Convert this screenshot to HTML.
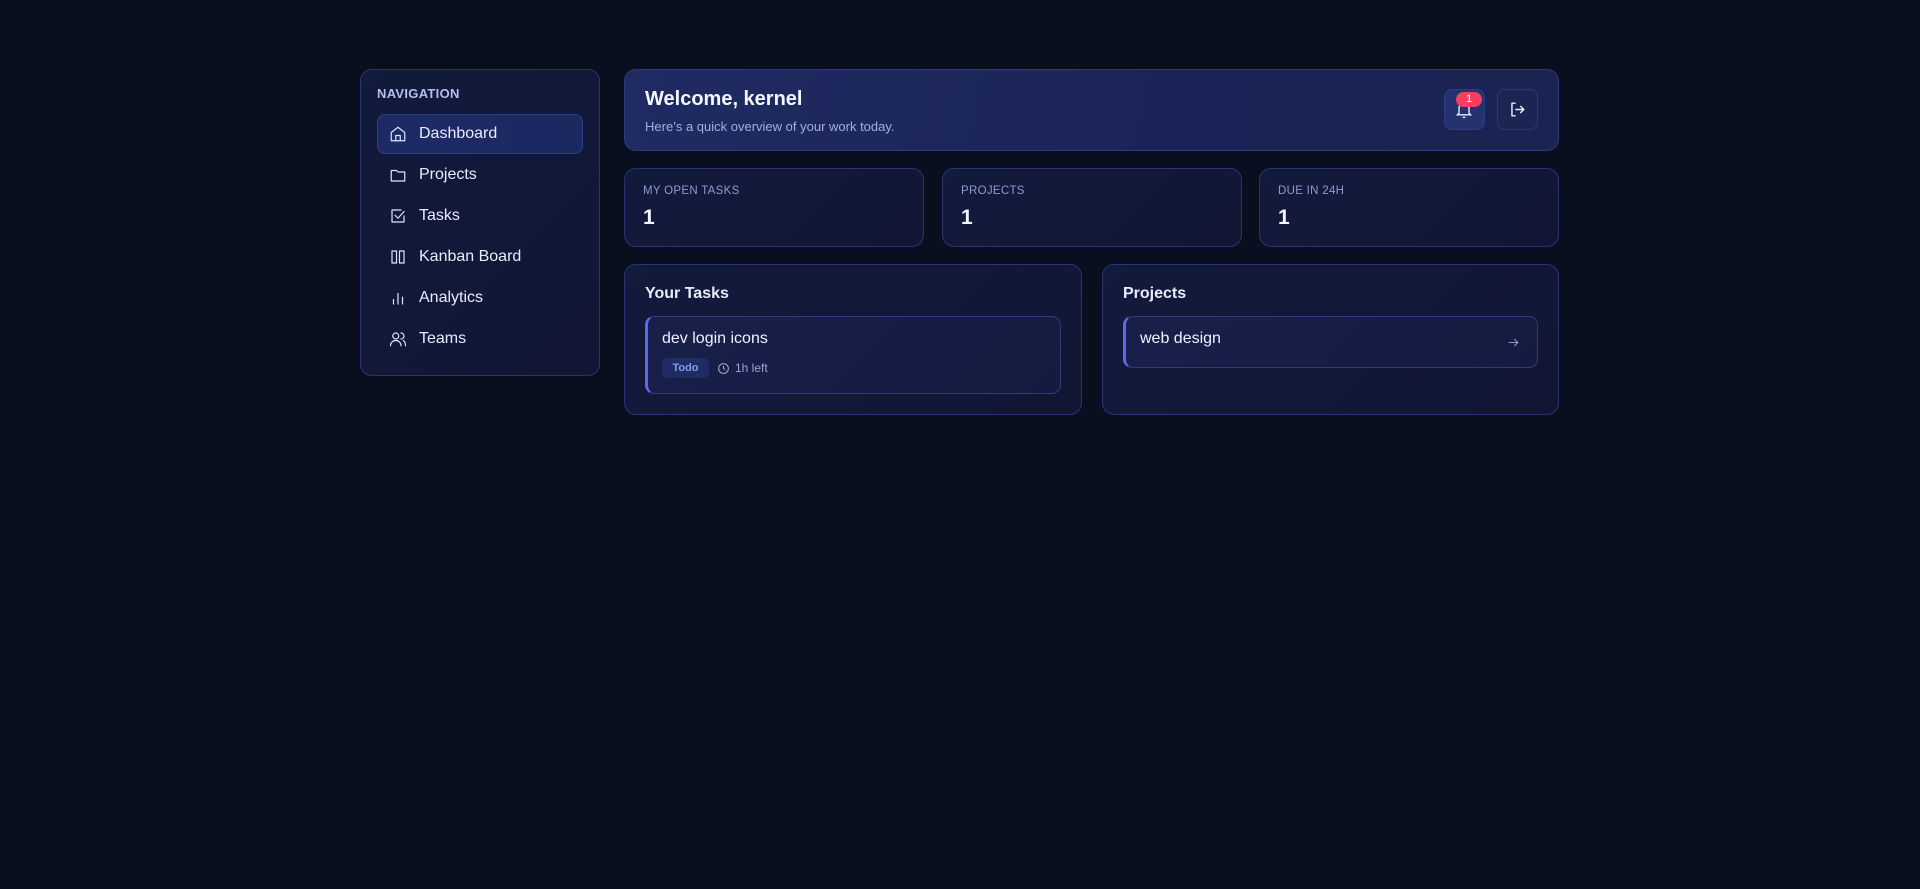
<!DOCTYPE html>
<html><head><meta charset="utf-8"><style>
*{box-sizing:border-box;margin:0;padding:0}
body{width:1920px;height:889px;background:#0a0f1f;font-family:"Liberation Sans",sans-serif;color:#e8ecff;position:relative;overflow:hidden}
.abs{position:absolute}
.panel{position:absolute;background:linear-gradient(135deg,#121a3d,#111634);border:1px solid #2a3470;border-radius:12px}
.nav{position:absolute;left:377px;width:206px;height:40px;display:flex;align-items:center;padding-left:12px;font-size:16px;color:#e8ecff}
.nav svg{width:18px;height:18px;margin-right:12px;fill:none;stroke:#dfe4ff;stroke-width:1.6;stroke-linecap:round;stroke-linejoin:round}
.nav.active{background:linear-gradient(90deg,#1e2a66,#1c2860);border:1px solid #2e3c85;border-radius:8px;padding-left:11px}
.lbl{font-size:11.5px;color:#8f9ad0;letter-spacing:.3px}
.val{font-size:21px;font-weight:bold;color:#f3f5ff}
</style></head><body>
<div class="panel" style="left:360px;top:69px;width:240px;height:307px"></div>
<div class="abs" style="left:377px;top:86px;font-size:13px;font-weight:bold;color:#b4bff0;letter-spacing:.3px">NAVIGATION</div>
<div class="nav active" style="top:114px"><svg viewBox="0 0 24 24"><path d="M3 10l9-7 9 7v11H3z"/><path d="M9 21v-7h6v7"/></svg>Dashboard</div>
<div class="nav" style="top:155px"><svg viewBox="0 0 24 24"><path d="M3 6h7l2 2h9v12H3z"/></svg>Projects</div>
<div class="nav" style="top:196px"><svg viewBox="0 0 24 24"><path d="M20 12v8H4V4h12"/><path d="M8 11l4 4 8-9"/></svg>Tasks</div>
<div class="nav" style="top:237px"><svg viewBox="0 0 24 24"><rect x="4" y="4" width="6" height="16"/><rect x="14" y="4" width="6" height="16"/></svg>Kanban Board</div>
<div class="nav" style="top:278px"><svg viewBox="0 0 24 24"><path d="M6 20v-6M12 20V6M18 20v-9"/></svg>Analytics</div>
<div class="nav" style="top:319px"><svg viewBox="0 0 24 24"><circle cx="9" cy="8" r="4"/><path d="M2 21c0-4 3-7 7-7s7 3 7 7"/><path d="M16 4a4 4 0 010 8M19 14c2 1 3 4 3 7"/></svg>Teams</div>

<div class="abs" style="left:624px;top:69px;width:935px;height:82px;border-radius:12px;border:1px solid #2c3a7a;background:linear-gradient(100deg,#1f2b62,#1b2456 60%,#1b2352)"></div>
<div class="abs" style="left:645px;top:88px;font-size:20px;font-weight:bold;color:#f5f7ff">Welcome, kernel</div>
<div class="abs" style="left:645px;top:119px;font-size:13px;color:#a5afdc">Here’s a quick overview of your work today.</div>
<div class="abs" style="left:1444px;top:89px;width:41px;height:41px;border-radius:8px;background:#253270;border:1px solid #2e3c82"></div>
<svg class="abs" style="left:1454px;top:99px" width="20" height="20" viewBox="0 0 24 24" fill="none" stroke="#e8ecff" stroke-width="1.6" stroke-linecap="round"><path d="M6 17V11a6 6 0 0112 0v6l2 2H4z"/><path d="M11 22h2"/></svg>
<div class="abs" style="left:1456px;top:92px;width:26px;height:15px;border-radius:8px;background:#f43f5e;font-size:11px;color:#fff;text-align:center;line-height:15px">1</div>
<div class="abs" style="left:1497px;top:89px;width:41px;height:41px;border-radius:8px;background:#1b2452;border:1px solid #2e3a78"></div>
<svg class="abs" style="left:1508px;top:100px" width="19" height="19" viewBox="0 0 24 24" fill="none" stroke="#e8ecff" stroke-width="1.8" stroke-linecap="round" stroke-linejoin="round"><path d="M9 4H5v16h4"/><path d="M10 12h10M16 8l4 4-4 4"/></svg>

<div class="panel" style="left:624px;top:168px;width:300px;height:79px"></div>
<div class="abs lbl" style="left:643px;top:185px">MY OPEN TASKS</div>
<div class="abs val" style="left:643px;top:206px">1</div>
<div class="panel" style="left:942px;top:168px;width:300px;height:79px"></div>
<div class="abs lbl" style="left:961px;top:185px">PROJECTS</div>
<div class="abs val" style="left:961px;top:206px">1</div>
<div class="panel" style="left:1259px;top:168px;width:300px;height:79px"></div>
<div class="abs lbl" style="left:1278px;top:185px">DUE IN 24H</div>
<div class="abs val" style="left:1278px;top:206px">1</div>

<div class="panel" style="left:624px;top:264px;width:458px;height:151px"></div>
<div class="abs" style="left:645px;top:285px;font-size:16px;font-weight:bold">Your Tasks</div>
<div class="abs" style="left:645px;top:316px;width:416px;height:78px;border-radius:9px;border:1px solid #2e3a7a;border-left:3px solid #6366f1;background:linear-gradient(135deg,#18204a,#151b40)"></div>
<div class="abs" style="left:662px;top:330px;font-size:16px;color:#f0f2ff">dev login icons</div>
<div class="abs" style="left:662px;top:358px;width:47px;height:20px;border-radius:5px;background:#1f2b62;color:#7f9cf5;font-size:11px;font-weight:bold;text-align:center;line-height:20px">Todo</div>
<svg class="abs" style="left:717px;top:362px" width="13" height="13" viewBox="0 0 24 24" fill="none" stroke="#9aa4d4" stroke-width="2"><circle cx="12" cy="12" r="9"/><path d="M12 7v5l3 2"/></svg>
<div class="abs" style="left:735px;top:361px;font-size:12px;color:#9aa4d4">1h left</div>

<div class="panel" style="left:1102px;top:264px;width:457px;height:151px"></div>
<div class="abs" style="left:1123px;top:285px;font-size:16px;font-weight:bold">Projects</div>
<div class="abs" style="left:1123px;top:316px;width:415px;height:52px;border-radius:9px;border:1px solid #2e3a7a;border-left:3px solid #6366f1;background:linear-gradient(135deg,#18204a,#151b40)"></div>
<div class="abs" style="left:1140px;top:330px;font-size:16px;color:#f0f2ff">web design</div>
<svg class="abs" style="left:1507px;top:336px" width="13" height="13" viewBox="0 0 24 24" fill="none" stroke="#8d97c9" stroke-width="2" stroke-linecap="round"><path d="M4 12h16M14 6l6 6-6 6"/></svg>
</body></html>
